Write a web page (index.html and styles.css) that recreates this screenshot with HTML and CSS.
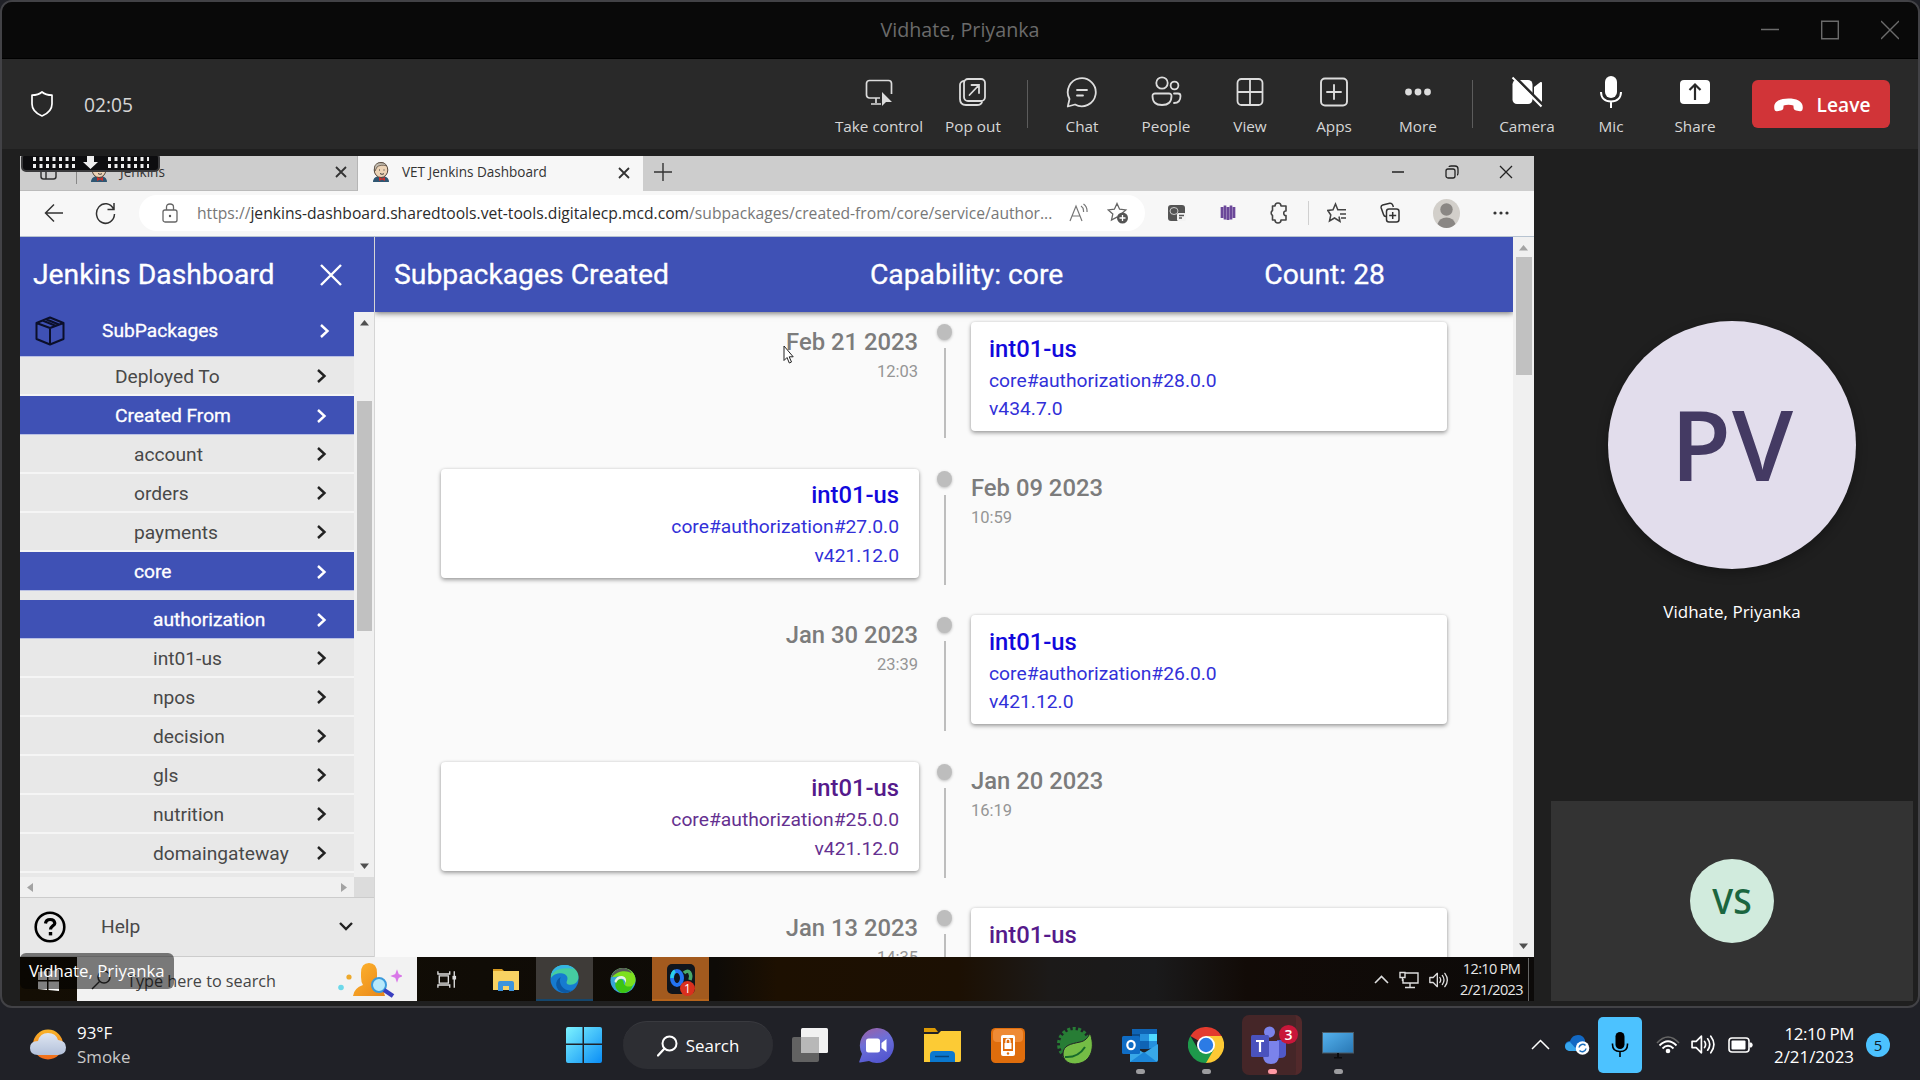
FILE: index.html
```
<!DOCTYPE html>
<html lang="en">
<head>
<meta charset="utf-8">
<title>Vidhate, Priyanka</title>
<link rel="stylesheet" href="styles.css">
</head>
<body>
<svg width="0" height="0" class="defs">
  <defs>
    <symbol id="chev" viewBox="0 0 12 16"><path d="M2 2l6.500 6L2 14" fill="none" stroke="currentColor" stroke-width="2.400"/></symbol>
    <symbol id="cross" viewBox="0 0 12 12"><path d="M1 1l10 10M11 1L1 11" fill="none" stroke="currentColor" stroke-width="1.800"/></symbol>
    <symbol id="jenkins" viewBox="0 0 18 20"><path d="M1 20c0-4 3-6 8-6s8 2 8 6z" fill="#2f5672"/><ellipse cx="9" cy="8" rx="6.800" ry="7.500" fill="#ecd3b6" stroke="#53453a"/><path d="M3 9C1 3 5 .5 9 .7c3 0 5 1.300 5.500 3C11 3 7 3 5 5z" fill="#c3bcb0" stroke="#53453a" stroke-width=".7"/><path d="M7.500 7.500v1M12 7.500v1M8 11.500c1.500 1 3 1 4 0" stroke="#333" fill="none"/><path d="M7 15l3 1.500 3-1.500v4l-3-1.500L7 19z" fill="#c9302c"/></symbol>
    <symbol id="speaker" viewBox="0 0 24 20"><path d="M1 7h4l5-5v16l-5-5H1zM13 7q2 3 0 6M16 4.500q4 5.500 0 11M19 2q6 8 0 16" fill="none" stroke="currentColor" stroke-width="1.600" stroke-linejoin="round" stroke-linecap="round"/></symbol>
  </defs>
</svg>
<div class="desktop">
  <div class="window">
    <header class="titlebar">
      <span class="win-title">Vidhate, Priyanka</span>
      <div class="win-buttons">
        <svg width="18" height="20"><path d="M0 9.500h18" stroke="#6b6b6b" stroke-width="1.500"/></svg>
        <svg width="18" height="20"><path d="M.7 1.200h16.600v17.600H.7z" fill="none" stroke="#6b6b6b" stroke-width="1.400"/></svg>
        <svg width="18" height="20"><path d="M0 1l18 18M18 1L0 19" stroke="#6b6b6b" stroke-width="1.400"/></svg>
      </div>
    </header>
    <div class="callbar">
      <svg class="shield" width="24" height="28" viewBox="0 0 24 28"><path d="M12 2c2.500 2.200 6 3.200 10 3.200V14c0 5.500-4 9.500-10 12C6 23.500 2 19.500 2 14V5.200C6 5.200 9.500 4.200 12 2z" fill="none" stroke="#fff" stroke-width="1.700" stroke-linejoin="round"/></svg>
      <span class="timer">02:05</span>
      <nav class="call-actions">
        <div class="act wide"><svg width="32" height="32" viewBox="0 0 32 32"><g fill="none" stroke="#dcdcdc" stroke-width="1.700"><path d="M17 22H6.500A3 3 0 0 1 3.500 19V7.500a3 3 0 0 1 3-3h19a3 3 0 0 1 3 3V18M13 22v5M8 28h10"/></g><path d="M19 16v14l4-4h6z" fill="#dcdcdc"/></svg><span>Take control</span></div>
        <div class="act"><svg width="32" height="32" viewBox="0 0 32 32"><g fill="none" stroke="#dcdcdc" stroke-width="1.800" stroke-linecap="round"><rect x="7" y="3" width="21" height="22" rx="4"/><path d="M7 5C4.500 5 3 7 3 9v14c0 4 2 6 6 6h11c3 0 4.500-1 5-3M12.500 19L22 9M14.500 9H22v8"/></g></svg><span>Pop out</span></div>
        <i class="bar"></i>
        <div class="act"><svg width="32" height="32" viewBox="0 0 32 32"><g fill="none" stroke="#dcdcdc" stroke-width="1.800" stroke-linejoin="round" stroke-linecap="round"><path d="M1.800 30.500L3.500 23A14 14 0 1 1 9 28.500z"/><path d="M11 14h10M11 19.500h6"/></g></svg><span>Chat</span></div>
        <div class="act"><svg width="32" height="32" viewBox="0 0 32 32"><g fill="none" stroke="#dcdcdc" stroke-width="1.800" stroke-linecap="round"><circle cx="12" cy="7" r="5.700"/><circle cx="24.500" cy="9.500" r="3.900"/><path d="M5 17.500h14a2.500 2.500 0 0 1 2.500 2.500c0 6-3 9-9.500 9s-9.500-3-9.500-9A2.500 2.500 0 0 1 5 17.500zM24 17.500h4a2.500 2.500 0 0 1 2.500 2.500c0 4.500-2 7-6.500 7"/></g></svg><span>People</span></div>
        <div class="act"><svg width="32" height="32" viewBox="0 0 32 32"><g fill="none" stroke="#dcdcdc" stroke-width="1.800"><rect x="3.500" y="3" width="25" height="26" rx="4"/><path d="M16 3v26M3.500 16h25"/></g></svg><span>View</span></div>
        <div class="act"><svg width="32" height="32" viewBox="0 0 32 32"><g fill="none" stroke="#dcdcdc" stroke-width="1.900" stroke-linecap="round"><rect x="3" y="2.500" width="26" height="27" rx="4"/><path d="M16 9v14M9 16h14"/></g></svg><span>Apps</span></div>
        <div class="act"><svg width="32" height="32" viewBox="0 0 32 32" fill="#dcdcdc"><circle cx="6.500" cy="16" r="3.400"/><circle cx="16" cy="16" r="3.400"/><circle cx="25.500" cy="16" r="3.400"/></svg><span>More</span></div>
        <i class="bar"></i>
        <div class="act"><svg width="32" height="32" viewBox="0 0 32 32"><rect x="1.500" y="4" width="20" height="24" rx="4.500" fill="#fff"/><path d="M23 11l6.500-5q1.500-.5 1.500 1v18q0 1.500-1.500 1L23 21z" fill="#fff"/><path d="M4 1l28 28" stroke="#292929" stroke-width="3"/><path d="M1.500 1.500l29 29" stroke="#fff" stroke-width="2"/></svg><span>Camera</span></div>
        <div class="act"><svg width="32" height="32" viewBox="0 0 32 32"><rect x="10" y="0" width="12" height="22" rx="6" fill="#fff"/><path d="M6 16c0 6 4 9.500 10 9.500S26 22 26 16M16 25.500V32" fill="none" stroke="#fff" stroke-width="2"/></svg><span>Mic</span></div>
        <div class="act"><svg width="32" height="32" viewBox="0 0 32 32"><rect x="1" y="4" width="30" height="24" rx="4" fill="#fff"/><path d="M16 24V9M10.500 14L16 8.500l5.500 5.500" fill="none" stroke="#292929" stroke-width="2.200"/></svg><span>Share</span></div>
      </nav>
      <button class="leave"><svg width="29" height="14" viewBox="0 0 29 14"><path d="M14.500 .5C22 .5 28.800 3 28.800 9.200c0 3-1 4.300-2.800 4l-4-.7c-1.700-.3-2.300-1.200-2.400-2.700l-.2-2.200c-3-1-6.800-1-9.800 0l-.2 2.200c-.1 1.500-.7 2.400-2.400 2.700l-4 .7C1.200 13.500.2 12.200.2 9.200.2 3 7 .5 14.500.5z" fill="#fff"/></svg>Leave</button>
    </div>

    <div class="stage">
      <section class="shared">
        <div class="tabstrip">
          <div class="tab inactive">
            <svg width="18" height="18" viewBox="0 0 18 18"><rect x="1" y="1" width="15" height="15" rx="2.500" fill="none" stroke="#333" stroke-width="1.500"/><path d="M6 5v11M1 5h15" stroke="#333" stroke-width="1.500"/></svg>
            <i></i>
            <svg width="18" height="20"><use href="#jenkins"/></svg>
            <span>Jenkins</span>
            <svg class="x" width="12" height="12"><use href="#cross"/></svg>
          </div>
          <div class="tab active">
            <svg width="18" height="20"><use href="#jenkins"/></svg>
            <span>VET Jenkins Dashboard</span>
            <svg class="x" width="12" height="12"><use href="#cross"/></svg>
          </div>
          <svg class="newtab" width="18" height="18"><path d="M9 0v18M0 9h18" stroke="#333" stroke-width="1.400"/></svg>
          <div class="browser-buttons">
            <svg width="14" height="14"><path d="M1 7h12" stroke="#222" stroke-width="1.400"/></svg>
            <svg width="14" height="14" viewBox="0 0 14 14"><g fill="none" stroke="#222" stroke-width="1.300"><rect x="1" y="4" width="9" height="9" rx="2"/><path d="M4 2q0-1 2-1h4q3 0 3 3v4q0 2-1 2"/></g></svg>
            <svg width="14" height="14"><path d="M1 1l12 12M13 1L1 13" stroke="#222" stroke-width="1.300"/></svg>
          </div>
          <div class="handle"><svg width="116" height="14"><g stroke="#eee" stroke-width="4" stroke-dasharray="3 3.500"><path d="M0 3h42M0 10h42M75 3h42M75 10h42"/></g><path d="M54 0h7v6h4l-7.500 7L50 6h4z" fill="#eee"/></svg></div>
        </div>
        <div class="addressbar">
          <svg width="20" height="20"><path d="M19 10H1.500M10 1.500L1.500 10l8.500 8.500" fill="none" stroke="#333" stroke-width="1.500"/></svg>
          <svg class="reload" width="22" height="24" viewBox="0 0 22 24"><path d="M19.500 8A9 9.800 0 1 0 20.500 13M20 2v6.500h-6.500" fill="none" stroke="#333" stroke-width="1.500"/></svg>
          <div class="url">
            <svg width="16" height="20" viewBox="0 0 16 20"><rect x="1" y="7" width="14" height="12" rx="2" fill="none" stroke="#666" stroke-width="1.300"/><path d="M4.500 7V4q0-3 3.500-3t3.500 3v3" fill="none" stroke="#666" stroke-width="1.300"/><circle cx="8" cy="13" r="1.200" fill="#555"/></svg>
            <span class="link">https://<b>jenkins-dashboard.sharedtools.vet-tools.digitalecp.mcd.com</b>/subpackages/created-from/core/service/author...</span>
            <svg class="aloud" width="19" height="20" viewBox="0 0 19 20"><path d="M1 18L7 3l6 15M3 13h8M12 3q3 2 2.500 6M14.500 1q4 3 3.500 8" fill="none" stroke="#777" stroke-width="1.200"/></svg>
            <svg width="22" height="22" viewBox="0 0 22 22"><path d="M10 1.500l2.600 5.700 6.200.7-4.600 4.200 1.300 6-5.500-3-5.500 3 1.300-6L1.200 7.900l6.200-.7z" fill="none" stroke="#666" stroke-width="1.300"/><circle cx="15.500" cy="16" r="5.500" fill="#555"/><path d="M15.500 13v6M12.500 16h6" stroke="#fff" stroke-width="1.300"/></svg>
          </div>
          <div class="extensions">
            <svg width="20" height="20" viewBox="0 0 20 20"><rect x="1" y="2" width="17" height="16" rx="3" fill="#555"/><ellipse cx="7" cy="8" rx="4" ry="3.500" fill="none" stroke="#ccc"/><rect x="10" y="10" width="9" height="8" rx="1.500" fill="#f3f3f3"/><path d="M12 12.500h5M12 15h3" stroke="#555" stroke-width="1.500"/></svg>
            <svg width="16" height="18" viewBox="0 0 16 18"><path d="M2 3v11M5 1.500v14M8 3v13M11 1.500v14M14 3v11" stroke="#6b4799" stroke-width="2.700"/></svg>
            <svg width="20" height="22" viewBox="0 0 20 22"><path d="M6 4a3 3 0 0 1 6 0h5v5c-3-.5-3 5 0 4.500V18h-5a3 3 0 0 1-6 0H3.500v-4.500a3 3 0 0 1 0-5V4z" fill="none" stroke="#444" stroke-width="1.600" stroke-linejoin="round"/></svg>
            <i></i>
            <svg width="20" height="22" viewBox="0 0 20 22"><path d="M12 14.500l1 5-5.500-3.500L2.500 19l1.300-6L.8 8.500l5.200-.7L8.500 2l2.300 5.800H19M13 12h6M14 16h5" fill="none" stroke="#444" stroke-width="1.500"/></svg>
            <svg width="20" height="22" viewBox="0 0 20 22"><g fill="none" stroke="#333" stroke-width="1.500"><rect x="6.500" y="7" width="12.500" height="13" rx="2.500"/><path d="M12.700 10v7M9.200 13.500h7M6 14.500q-2 0-2.500-2L1.200 6q-.5-2.500 1.500-3l7-1.700q2-.3 3 1.700l.7 2"/></g></svg>
            <svg width="27" height="29" viewBox="0 0 27 29"><ellipse cx="13.500" cy="14.500" rx="13.500" ry="14.500" fill="#d2cfca"/><circle cx="13.500" cy="10.500" r="6.200" fill="#8a8784"/><path d="M4.500 25q2-6.500 9-6.500t9 6.500q-4 4-9 4t-9-4z" fill="#8a8784"/></svg>
            <svg width="16" height="6" fill="#333"><circle cx="2" cy="3" r="1.600"/><circle cx="8" cy="3" r="1.600"/><circle cx="14" cy="3" r="1.600"/></svg>
          </div>
        </div>

        <div class="app">
          <aside class="sidebar">
            <div class="side-head"><span>Jenkins Dashboard</span><svg width="22" height="22"><path d="M1 1l20 20M21 1L1 21" stroke="#fff" stroke-width="2.400"/></svg></div>
            <div class="side-body">
              <div class="menu">
                <div class="row sel top"><svg class="cube" width="30" height="30" viewBox="0 0 30 30"><path d="M15 1.500l13.500 5.500v16L15 28.500 1.500 23V7zM1.500 7L15 12l13.500-5M15 12v16.500M7.500 4.500l13 5.300M11 3.200l13 5.300" fill="none" stroke="#0b0f2a" stroke-width="2" stroke-linejoin="round"/></svg><span>SubPackages</span><svg class="chev"><use href="#chev"/></svg></div>
                <div class="row l1"><span>Deployed To</span><svg class="chev"><use href="#chev"/></svg></div>
                <div class="row l1 sel"><span>Created From</span><svg class="chev"><use href="#chev"/></svg></div>
                <div class="row l2"><span>account</span><svg class="chev"><use href="#chev"/></svg></div>
                <div class="row l2"><span>orders</span><svg class="chev"><use href="#chev"/></svg></div>
                <div class="row l2"><span>payments</span><svg class="chev"><use href="#chev"/></svg></div>
                <div class="row l2 sel"><span>core</span><svg class="chev"><use href="#chev"/></svg></div>
                <div class="row l3 sel spaced"><span>authorization</span><svg class="chev"><use href="#chev"/></svg></div>
                <div class="row l3"><span>int01-us</span><svg class="chev"><use href="#chev"/></svg></div>
                <div class="row l3"><span>npos</span><svg class="chev"><use href="#chev"/></svg></div>
                <div class="row l3"><span>decision</span><svg class="chev"><use href="#chev"/></svg></div>
                <div class="row l3"><span>gls</span><svg class="chev"><use href="#chev"/></svg></div>
                <div class="row l3"><span>nutrition</span><svg class="chev"><use href="#chev"/></svg></div>
                <div class="row l3"><span>domaingateway</span><svg class="chev"><use href="#chev"/></svg></div>
              </div>
              <div class="vscroll side-scroll">
                <svg width="9" height="6"><path d="M0 5.500L4.500 0 9 5.500z" fill="#505050"/></svg>
                <div class="thumb"></div>
                <svg width="9" height="6"><path d="M0 .5h9L4.500 6z" fill="#505050"/></svg>
              </div>
            </div>
            <div class="hscroll"><div class="track"><svg width="6" height="9"><path d="M6 0v9L0 4.500z" fill="#a3a3a3"/></svg><svg width="6" height="9"><path d="M0 0v9l6-4.500z" fill="#a3a3a3"/></svg></div></div>
            <div class="help"><svg width="32" height="32" viewBox="0 0 32 32"><circle cx="16" cy="16" r="14.300" fill="none" stroke="#000" stroke-width="2.600"/><path d="M11.500 12.500q.5-4 4.700-4t4.600 3.700c0 2.400-4.300 3-4.300 6.300" fill="none" stroke="#000" stroke-width="3.200"/><rect x="14.800" y="21" width="3.400" height="3.400" fill="#000"/></svg><span>Help</span><svg width="16" height="12"><path d="M2 2l6 6 6-6" fill="none" stroke="#222" stroke-width="2.400"/></svg></div>
          </aside>

          <main class="main">
            <div class="main-head"><span>Subpackages Created</span><span>Capability: core</span><span>Count: 28</span></div>
            <div class="timeline">
              <div class="entry"><div class="when left">Feb 21 2023<small>12:03</small></div><div class="spine"></div><div class="card"><h3>int01-us</h3><p>core#authorization#28.0.0</p><p>v434.7.0</p></div></div>
              <div class="entry"><div class="card left"><h3>int01-us</h3><p>core#authorization#27.0.0</p><p>v421.12.0</p></div><div class="spine"></div><div class="when">Feb 09 2023<small>10:59</small></div></div>
              <div class="entry"><div class="when left">Jan 30 2023<small>23:39</small></div><div class="spine"></div><div class="card"><h3>int01-us</h3><p>core#authorization#26.0.0</p><p>v421.12.0</p></div></div>
              <div class="entry"><div class="card left visited"><h3>int01-us</h3><p>core#authorization#25.0.0</p><p>v421.12.0</p></div><div class="spine"></div><div class="when">Jan 20 2023<small>16:19</small></div></div>
              <div class="entry"><div class="when left">Jan 13 2023<small>14:35</small></div><div class="spine"></div><div class="card visited"><h3>int01-us</h3></div></div>
            </div>
            <svg class="cursor" width="12" height="20" viewBox="0 0 12 20"><path d="M1 1v14.500l3-3 2.300 5.500 2.200-1-2.300-5.200h4z" fill="#fff" stroke="#222"/></svg>
          </main>
          <div class="vscroll page-scroll">
            <svg width="9" height="6"><path d="M0 5.500L4.500 0 9 5.500z" fill="#a3a3a3"/></svg>
            <div class="thumb"></div>
            <svg width="9" height="6"><path d="M0 .5h9L4.500 6z" fill="#505050"/></svg>
          </div>
        </div>

        <div class="w10bar">
          <div class="w10start"><svg width="21" height="21" viewBox="0 0 21 21" fill="#fff"><path d="M0 2l9-1v9H0zM10.500 1L21 0v10H10.500zM0 11.500h9v8.500l-9-1zM10.500 11.500H21V21l-10.500-1z"/></svg></div>
          <div class="w10search">
            <svg width="20" height="20" viewBox="0 0 20 20"><circle cx="13" cy="7" r="6" fill="none" stroke="#333" stroke-width="1.500"/><path d="M8.500 11.500L1 19" stroke="#333" stroke-width="1.500"/></svg>
            <span>Type here to search</span>
            <svg class="promo" width="64" height="36" viewBox="0 0 64 36"><defs><linearGradient id="pg" x1="0" y1="0" x2="1" y2="1"><stop offset="0" stop-color="#ffb52e"/><stop offset="1" stop-color="#e8861a"/></linearGradient></defs><circle cx="11" cy="15" r="2.600" fill="#eda92c"/><circle cx="3" cy="25.500" r="2.800" fill="#6cd8ea"/><path d="M15 34q1-8 10-11-2-3-2-8v-4q0-10 8-10t8 10v4q0 5-2 8 9 3 10 11z" fill="url(#pg)"/><circle cx="41" cy="23" r="7" fill="#b7e9fb" stroke="#3b9bdc" stroke-width="2"/><path d="M46 28l9 6" stroke="#3a3fc0" stroke-width="4.500"/><path d="M59 9.500l1.200 3.300 3.300 1.200-3.300 1.200L59 18.500l-1.200-3.300-3.300-1.200 3.300-1.200z" fill="#d977e8" stroke="#d977e8" stroke-width="1.500"/></svg>
          </div>
          <div class="w10apps">
            <div class="w10tile"><svg width="20" height="19" viewBox="0 0 22 20"><g fill="none" stroke="#ddd" stroke-width="1.500"><path d="M1 1v3h13V1M1 19v-3h13v3M2.500 6h10v8h-10zM19 1v18"/></g><rect x="17" y="6" width="4" height="4" fill="#ddd"/></svg></div>
            <div class="w10tile"><svg width="26" height="24" viewBox="0 0 26 24"><path d="M0 1h9l3 3H0z" fill="#d79a20"/><path d="M0 3h26v19H0z" fill="#f8d262"/><path d="M5 23V15q0-2 2-2h12q2 0 2 2v8h-5v-5h-6v5z" fill="#3d94dc"/></svg></div>
            <div class="w10tile current"><svg width="29" height="30" viewBox="0 0 30 30"><circle cx="15" cy="15" r="14.500" fill="#167bd0"/><path d="M1 12C2 4 8 .5 15 .5 23 .5 29.500 6 29.500 13c0 5-4 8-8 8-4 0-5-2-4-4 2-4-1-8-6-8-5 0-9 2-10 5z" fill="#45cda0"/><path d="M1 12C2 4 8 .5 15 .5c5 0 8 2 10 4-6-1-20-2-24 7.500z" fill="#35b4e4"/><path d="M11 13c-3 7 3 15 12 14q-4 3-9 2.300C5 27 4 17 11 13z" fill="#0c59a4"/></svg></div>
            <div class="w10tile run"><svg width="26" height="27" viewBox="0 0 30 30"><circle cx="15" cy="15" r="14.500" fill="#38a6d8"/><path d="M7 24C4 17 9 12 14 14c3 2 1 5 3 6 4 2 8-1 10-4 0 8-5 13.500-12 13.500q-5 0-8-5.500z" fill="#3cc512"/><path d="M1.500 10C4 4 9 .5 15 .5 23 .5 29.500 7 29.500 14c0 5-4 8-8 8-4 0-5-2-4-4 2-4-1-8-6-8-5 0-8 2-10 0z" fill="#7de01e"/><path d="M1.500 10C4 4 9 .5 15 .5c5 0 9 3 10 6-6-4-17-3-23 5z" fill="#565b58"/><path d="M5 16q3-7 10-6 5 2 3 8-1-5-5-5-4 0-6 5z" fill="#e8f3e4"/></svg></div>
            <div class="w10tile alert"><svg width="28" height="30" viewBox="0 0 28 30"><rect width="28" height="30" rx="5" fill="#10151c"/><ellipse cx="10" cy="14" rx="5" ry="7" fill="none" stroke="#2374f2" stroke-width="4"/><path d="M5 14c0-4 1-6 3-7" stroke="#2bd0e8" stroke-width="3.500" fill="none"/><path d="M17 9c5-5 8 1 6 7" fill="none" stroke="#49a96a" stroke-width="3.500"/></svg><b>1</b></div>
          </div>
          <div class="w10tray">
            <svg width="15" height="9"><path d="M1 8l6.500-6.500L14 8" fill="none" stroke="#ddd" stroke-width="1.600"/></svg>
            <svg width="20" height="18" viewBox="0 0 20 18"><path d="M6 2h13v10H4V8M11 12v4M6 16.500h10M1 1.500h5v5H1zM3.500 6.500V10" fill="none" stroke="#ddd" stroke-width="1.400"/></svg>
            <svg width="20" height="18" color="#ddd"><use href="#speaker"/></svg>
            <div class="w10clock"><span>12:10 PM</span><span>2/21/2023</span></div>
            <i></i>
          </div>
        </div>
        <div class="nameplate">Vidhate, Priyanka</div>
      </section>

      <section class="people">
        <div class="remote"><div class="avatar big">PV</div><span>Vidhate, Priyanka</span></div>
        <div class="selfview"><div class="avatar small">VS</div></div>
      </section>
    </div>
  </div>

  <footer class="taskbar">
    <div class="weather">
      <svg width="37" height="32" viewBox="0 0 37 32"><defs><linearGradient id="sun" x2="0" y2="1"><stop offset="0" stop-color="#f9b52a"/><stop offset="1" stop-color="#f06a1a"/></linearGradient><linearGradient id="cl" x2="0" y2="1"><stop offset="0" stop-color="#dfe6f2"/><stop offset="1" stop-color="#b3c1da"/></linearGradient></defs><circle cx="18" cy="15.500" r="15" fill="url(#sun)"/><path d="M8 26q-8 0-8-7t8-7q2-8 10-8t10 7q8 .5 8 7.500T28 26z" fill="url(#cl)"/></svg>
      <div><span>93°F</span><span class="dim">Smoke</span></div>
    </div>
    <div class="dock">
      <div class="cell"><svg width="36" height="36" viewBox="0 0 36 36"><defs><linearGradient id="wg" x2="1" y2="1"><stop offset="0" stop-color="#7df3ff"/><stop offset="1" stop-color="#0a8df5"/></linearGradient></defs><path d="M2 0h14.500v16.500H0V2q0-2 2-2zM18 0h16q2 0 2 2v14.500H18zM0 18h16.500v18H2q-2 0-2-2zM18 18h18v16q0 2-2 2H18z" fill="url(#wg)"/></svg></div>
      <div class="search"><svg width="21" height="22" viewBox="0 0 21 22"><circle cx="12.500" cy="8.500" r="7" fill="none" stroke="#fff" stroke-width="2"/><path d="M7.500 13.500L1 20.500" stroke="#fff" stroke-width="2.200" stroke-linecap="round"/></svg><span>Search</span></div>
      <div class="cell"><svg width="36" height="34" viewBox="0 0 36 34"><rect x="0" y="9" width="27" height="25" rx="2" fill="#626262"/><rect x="9" y="0" width="27" height="25" rx="1.500" fill="#f2f2f2"/><path d="M9 9h18v16H9z" fill="#b8b8b8"/></svg></div>
      <div class="cell"><svg width="35" height="35" viewBox="0 0 35 35"><defs><linearGradient id="cg" x2=".4" y2="1"><stop offset="0" stop-color="#a05fa0"/><stop offset=".5" stop-color="#6c6fd8"/><stop offset="1" stop-color="#5558d0"/></linearGradient></defs><path d="M17.500 0A17 17.500 0 1 1 10 33l-9 1.500q-1 0-.7-1L3 26A17.300 17.500 0 0 1 17.500 0z" fill="url(#cg)"/><rect x="7" y="10.500" width="14" height="14" rx="2.500" fill="#fff"/><path d="M22.500 15l5-4v13l-5-4z" fill="#fff"/></svg></div>
      <div class="cell"><svg width="37" height="34" viewBox="0 0 37 34"><path d="M0 0h11l3 4H0z" fill="#dc9a04"/><path d="M0 6h14l3-3h20v29q0 2-2 2H0z" fill="#fccb35"/><path d="M6 34v-7q0-4 4-4h17q4 0 4 4v7z" fill="#0a78cf"/><path d="M11 28.500h14" stroke="#07457c" stroke-width="1.500"/></svg></div>
      <div class="cell"><svg width="34" height="35" viewBox="0 0 34 35"><rect width="34" height="35" rx="4.500" fill="#df6d0c"/><rect x="2" y="1" width="30" height="13" rx="4" fill="#ee8a35"/><rect x="10" y="7" width="14" height="21" rx="2" fill="#fff"/><rect x="12" y="10" width="10" height="13" fill="#df6d0c"/><path d="M15 15v-2q0-2 2-2t2 2v2" fill="none" stroke="#fff" stroke-width="1.300"/><rect x="13.500" y="15" width="7" height="6" fill="#fff"/><circle cx="17" cy="25.500" r="1.200" fill="#df6d0c"/></svg></div>
      <div class="cell"><svg width="37" height="37" viewBox="0 0 37 37"><path d="M20 0v5L6 30 4 27Q-3 17 5 8t15-8z" fill="none"/><circle cx="18" cy="17" r="15" fill="none" stroke="#277d35" stroke-width="4" stroke-dasharray="3 2.300"/><circle cx="18" cy="17" r="14" fill="#277d35"/><path d="M34 6c5 12 3 30-15 31C11 37 7 32 7 27c0-9 8-10 17-12 5-1 8-4 10-9z" fill="#74bd45" stroke="#202127"/><path d="M9 30q13 1 20-10" fill="none" stroke="#176b2b" stroke-width="2"/></svg></div>
      <div class="cell"><svg width="36" height="34" viewBox="0 0 36 34"><path d="M10 1h25v20H10z" fill="#0f64b5"/><path d="M10 6h8v9h-8z" fill="#0a4d8f"/><path d="M18 6h9v7h-9zM27 13h8v7h-8z" fill="#2590dd"/><path d="M27 6h8v7h-8z" fill="#50d9ff"/><path d="M8 16l14 9 14-9v16q0 2-2 2H8z" fill="#38a8e8"/><path d="M8 34l14-10 13 10z" fill="#1c86d8"/><rect y="8" width="18" height="18" rx="1.500" fill="#0f6cc4"/><ellipse cx="9" cy="17" rx="3.700" ry="4.200" fill="none" stroke="#fff" stroke-width="2.200"/></svg><i></i></div>
      <div class="cell"><svg width="36" height="36" viewBox="0 0 36 36"><path d="M18 18L2.400 9A18 18 0 0 1 33.600 9z" fill="#e33b2e"/><path d="M18 18V9h15.600A18 18 0 0 1 18 36z" fill="#fcc934"/><path d="M2.400 9L10.200 22.500 25.800 22.500 18 36A18 18 0 0 1 2.400 9z" fill="#1e9a4b"/><circle cx="18" cy="18" r="9" fill="#fff"/><circle cx="18" cy="18" r="7.200" fill="#2c7be5"/></svg><i></i></div>
      <div class="cell teams"><svg width="36" height="40" viewBox="0 -1 36 40"><circle cx="18.500" cy="6" r="5.500" fill="#7b83eb"/><path d="M26 14h9v14q0 4-6 4h-3z" fill="#5059c9"/><path d="M12 15h16v14q0 9-8 9T12 29z" fill="#7b83eb"/><rect y="9" width="18" height="22" rx="1.500" fill="#4a52bd"/><path d="M5 15h8M9 15v11" stroke="#fff" stroke-width="2.200"/></svg><b>3</b><i></i></div>
      <div class="cell"><svg width="32" height="27" viewBox="0 0 32 27"><defs><linearGradient id="mg" x2="1" y2="1"><stop offset="0" stop-color="#55b2ee"/><stop offset="1" stop-color="#2877b4"/></linearGradient></defs><rect x=".5" y=".5" width="31" height="20.500" fill="url(#mg)" stroke="#4a5a66"/><path d="M15 21h2v4h3v1.500h-8V25h3z" fill="#0c0c0f"/></svg><i></i></div>
    </div>
    <div class="tray">
      <svg width="19" height="11"><path d="M1 10l8.500-8.500L18 10" fill="none" stroke="#fff" stroke-width="1.500"/></svg>
      <svg width="25" height="20" viewBox="0 0 25 20"><path d="M5 15.500Q0 15.500 0 11t5-5q2-6 8-6 5 0 7 5v10.500z" fill="#1268c3"/><path d="M4 16Q0 15 0 11q1-4 5-4l8 9z" fill="#37a6ec"/><circle cx="17.500" cy="13" r="6.800" fill="#fff"/><path d="M14 12.500a3.800 3.800 0 0 1 6.500-2M21 13.500a3.800 3.800 0 0 1-6.500 2" fill="none" stroke="#1c6fbd" stroke-width="1.500"/></svg>
      <div class="mic"><svg width="18" height="25" viewBox="0 0 18 25"><rect x="4.500" y="0" width="9" height="17" rx="4.500"/><path d="M1.500 11.500v1q0 7 7.500 7t7.500-7v-1M9 19.500V25" fill="none" stroke="#000" stroke-width="1.600"/></svg></div>
      <svg class="wifi" width="24" height="18" viewBox="0 0 24 18"><g fill="none" stroke-width="1.600"><path d="M1 7Q12-5 23 7" stroke="#666"/><path d="M3.500 9.500Q12 1 20.500 9.500M6.500 12.500Q12 7 17.500 12.500" stroke="#fff" stroke-width="1.800"/></g><circle cx="12" cy="15" r="2.300" fill="#fff"/></svg>
      <svg width="25" height="21" color="#fff"><use href="#speaker"/></svg>
      <svg width="25" height="16" viewBox="0 0 25 16"><rect x="1" y="1" width="20" height="14" rx="3" fill="none" stroke="#fff" stroke-width="1.600"/><rect x="3.500" y="3.500" width="14" height="9" rx="1" fill="#fff"/><path d="M22 6h1.500q1.500 2 0 4H22z" fill="#fff" stroke="#fff"/></svg>
      <div class="clock"><span>12:10 PM</span><span>2/21/2023</span></div>
      <div class="count">5</div>
    </div>
  </footer>
</div>
</body>
</html>
```
FILE: styles.css
```
* { box-sizing: border-box; }
body { margin: 0; font-family: "Open Sans", "Noto Sans", sans-serif; color: #fff; }
svg { display: block; flex: none; }
.defs { position: absolute; }
.desktop { width: 1920px; height: 1080px; background: #202127; display: flex; flex-direction: column; overflow: hidden; }

/* meeting window */
.window { height: 1008px; width: 1920px; border: 2px solid #424246; border-radius: 12px; background: #1f1f1f; display: flex; flex-direction: column; overflow: hidden; }
.titlebar { height: 57px; background: #090909; border-bottom: 1px solid #000; display: grid; grid-template-columns: 1fr auto 1fr; align-items: center; padding-bottom: 1px; }
.win-title { grid-column: 2; font-size: 19.700px; color: #6b6b6b; }
.win-buttons { display: flex; justify-content: flex-end; gap: 42px; padding-right: 19px; }
.callbar { height: 90px; background: #292929; display: flex; align-items: center; padding: 0 28px 0 28px; }
.timer { font-size: 19.200px; color: #d6d6d6; margin-left: 30px; padding-top: 1px; }
.call-actions { margin-left: auto; display: flex; align-items: center; }
.act { width: 84px; display: flex; flex-direction: column; align-items: center; gap: 7px; font-size: 15.300px; line-height: 22px; color: #d6d6d6; padding-top: 4px; white-space: nowrap; }
.act.wide { width: 104px; }
.bar { width: 1px; height: 48px; background: #5c5c5c; margin: 0 12px; }
.leave { width: 138px; height: 48px; border: 0; border-radius: 6px; background: #d13438; color: #fff; font: 600 19.200px "Open Sans", sans-serif; display: flex; align-items: center; justify-content: center; gap: 14px; padding: 1px 0 0 2px; margin-left: 15px; }

.stage { flex: 1; display: flex; padding: 7px 5px 5px 18px; }
.shared { width: 1514px; height: 845px; display: flex; flex-direction: column; position: relative; background: #fafafa; overflow: hidden; }

/* browser chrome */
.tabstrip { height: 35px; background: #cdcdcd; display: flex; align-items: flex-start; position: relative; font-size: 13.550px; color: #333; }
.tab { height: 35px; display: flex; align-items: center; padding-bottom: 3px; }
.tab.inactive { width: 338px; padding-left: 20px; border-right: 1px solid #b5b5b5; border-bottom: 1px solid #bbb; }
.tab.inactive i { width: 1px; height: 24px; background: #888; margin: 0 13px 0 18px; }
.tab.inactive span { margin-left: 12px; }
.tab.active { width: 285px; padding-left: 14px; background: #f7f7f7; }
.tab.active span { margin-left: 12px; }
.x { margin: 1px 10px 0 auto; }
.active .x { margin-right: 13px; }
.newtab { margin: 7px 0 0 11px; }
.browser-buttons { margin: 9px 21px 0 auto; display: flex; gap: 40px; }
.handle { position: absolute; left: 1px; top: -3px; width: 139px; height: 19px; background: #0d0d0f; border: 2px solid #3a3a3c; border-radius: 5px; overflow: hidden; display: flex; align-items: flex-end; justify-content: center; }
.addressbar { height: 46px; background: #f7f7f7; border-bottom: 1px solid #b7c3d0; display: flex; align-items: center; padding: 0 0 1px 24px; color: #777; }
.reload { margin-left: 30px; }
.url { margin-left: 23px; width: 1006px; height: 36px; border-radius: 18px; background: #fff; display: flex; align-items: center; padding: 0 16px 0 23px; }
.link { margin-left: 19px; font-size: 15.670px; white-space: nowrap; width: 857px; }
.link b { font-weight: 400; color: #2b2b2b; }
.aloud { margin: 0 auto 0 15px; }
.extensions { display: flex; align-items: center; gap: 33px; padding-left: 22px; }
.extensions i { width: 1px; height: 24px; background: #d0d0d0; margin: 0 -14.500px; }

/* dashboard */
.app { height: 720px; display: flex; font-family: Roboto, sans-serif; color: #484848; }
.sidebar { width: 355px; display: flex; flex-direction: column; border-right: 1px solid #d5d5d5; background: #e8e8e8; }
.side-head { height: 75px; background: #3f51b5; color: #fff; display: flex; align-items: center; justify-content: space-between; padding: 0 32px 0 13px; font-size: 28.300px; -webkit-text-stroke: .3px #fff; }
.side-body { height: 565px; display: flex; }
.menu { width: 334px; overflow: hidden; }
.row { height: 39px; border-bottom: 2px solid #f5f5f5; display: flex; align-items: center; justify-content: space-between; padding: 1px 26px 0 0; font-size: 19.200px; }
.row.sel { background: #3f51b5; color: #fff; border-bottom: 1px solid #b9c0e4; }
.row.sel span { -webkit-text-stroke: .3px #fff; }
.row.top { height: 45px; padding: 0 23px 7px 15px; }
.row.top span { margin-right: auto; margin-left: 37px; }
.row.l1 { padding-left: 95px; }
.row.l2 { padding-left: 114px; }
.row.l3 { padding-left: 133px; }
.row.spaced { margin-top: 9px; }
.chev { width: 12px; height: 16px; color: #222; }
.sel .chev { color: #fff; }
.vscroll { background: #f0f0f0; display: flex; flex-direction: column; align-items: center; }
.vscroll .thumb { background: #c1c1c1; }
.vscroll svg:last-child { margin-top: auto; }
.side-scroll { width: 20px; padding: 8px 0; }
.side-scroll .thumb { width: 15px; height: 230px; margin-top: 75px; }
.hscroll { height: 21px; background: #dcdcdc; border-bottom: 1px solid #ccc; }
.track { width: 334px; height: 20px; background: #f0f0f0; display: flex; align-items: center; justify-content: space-between; padding: 0 7px; }
.help { flex: 1; display: flex; align-items: center; padding: 0 20px 1px 14px; font-size: 19.200px; border-bottom: 1px solid #ccc; }
.help span { margin: 0 auto 0 35px; }
.main { width: 1138px; display: flex; flex-direction: column; position: relative; overflow: hidden; background: #fafafa; }
.main-head { height: 75px; flex: none; background: #3f51b5; color: #fff; box-shadow: 0 1px 6px rgba(0,0,0,.6); display: flex; align-items: center; justify-content: space-between; padding: 0 128px 0 19px; font-size: 28.300px; -webkit-text-stroke: .3px #fff; position: relative; z-index: 1; }
.timeline { padding: 10px 66px 0; }
.entry { display: grid; grid-template-columns: 478px 52px 476px; height: 146.600px; }
.when { font-size: 23.800px; font-weight: 500; line-height: 30px; color: #7c7c7c; padding-top: 4.500px; }
.when small { display: block; font-size: 16.500px; font-weight: 400; line-height: 22px; margin-top: 4px; color: #959595; }
.when.left { text-align: right; padding-right: 1px; }
.spine { display: flex; flex-direction: column; align-items: center; padding: 2px 1px 0 0; }
.spine::before { content: ""; width: 15px; height: 16px; border-radius: 50%; background: #bdbdbd; box-shadow: 0 1px 3px rgba(0,0,0,.25); }
.spine::after { content: ""; width: 2px; height: 90px; background: #bdbdbd; margin-top: 8px; }
.card { height: 109px; background: #fff; border-radius: 4px; box-shadow: 0 2px 4px rgba(0,0,0,.36), 0 0 3px rgba(0,0,0,.1); padding: 11.500px 20px 0 18px; color: #3230d8; }
.card h3 { margin: 0 0 3px; font-size: 23.800px; font-weight: 500; line-height: 30px; color: #1208dc; }
.card p { margin: 0; font-size: 19.280px; line-height: 28.500px; }
.card.left { text-align: right; }
.card.visited { color: #653090; }
.card.visited h3 { color: #551a8b; }
.cursor { position: absolute; left: 408px; top: 108px; z-index: 2; }
.page-scroll { width: 21px; padding: 8px 0; }
.page-scroll .thumb { width: 16px; height: 118px; margin-top: 6px; }

/* remote taskbar */
.w10bar { height: 44px; background: linear-gradient(90deg, #140e04 0, #0e0b07 46%, #1d1001 50%, #1c1003 62%, #1c1a19 68%, #1a1a1b 75%, #120b07 81%, #0c0a09 100%); display: flex; }
.w10start { width: 57px; display: flex; align-items: center; justify-content: center; padding-top: 2px; }
.w10search { width: 340px; background: #f2f2f2; color: #444; display: flex; align-items: center; padding: 2px 15px 0 14px; font-size: 16.200px; }
.w10search span { margin-left: 16px; white-space: nowrap; padding-top: 1px; }
.promo { margin-left: auto; }
.w10apps { display: flex; }
.w10tile { width: 59px; display: flex; align-items: center; justify-content: center; position: relative; padding-top: 1px; }
.w10tile.current { width: 57px; margin-left: 1px; background: #3e3b38; border-bottom: 2px solid #16466b; }
.w10tile.run { width: 59px; padding-top: 3px; }
.w10tile.alert { width: 57px; background: #a35a1e; border-bottom: 2px solid #b5641c; }
.w10tile b { position: absolute; right: 14px; bottom: 3px; width: 15px; height: 15px; border-radius: 50%; background: #d9301e; font: 400 12px/15px "Open Sans", sans-serif; text-align: center; }
.w10tray { margin-left: auto; display: flex; align-items: center; gap: 10px; padding-top: 1px; }
.w10clock { font-size: 14.500px; line-height: 21px; display: flex; flex-direction: column; align-items: center; color: #e6e6e6; width: 65px; letter-spacing: -.65px; margin-bottom: 1px; }
.w10tray > i { width: 1px; height: 44px; background: #666; margin: 0 5px 0 -6px; }
.nameplate { position: absolute; left: 0; top: 797px; width: 154px; height: 36px; border-radius: 6px; background: rgba(0,0,0,.5); padding-left: 9px; font-size: 16.800px; line-height: 35px; white-space: nowrap; }

/* participants */
.people { margin-left: 17px; flex: 1; display: flex; flex-direction: column; }
.remote { height: 645px; display: flex; flex-direction: column; align-items: center; padding-top: 165px; font-size: 17px; }
.remote span { margin-top: 31px; line-height: 24px; }
.avatar { border-radius: 50%; display: flex; align-items: center; justify-content: center; font-weight: 600; }
.big { width: 248px; height: 248px; background: #e2ddec; color: #443a63; font-size: 98px; letter-spacing: 1px; padding: 0 0 5px 1px; box-shadow: 0 4px 12px rgba(0,0,0,.3); }
.small { width: 84px; height: 84px; background: #d1ebdd; color: #1b663f; font-size: 33.500px; padding-bottom: 1px; }
.selfview { flex: 1; background: #333; display: flex; align-items: center; justify-content: center; }

/* local taskbar */
.taskbar { height: 72px; display: grid; grid-template-columns: 551px auto 1fr; align-items: center; font-size: 16.900px; }
.weather { display: flex; align-items: center; gap: 10px; padding: 2px 0 0 30px; line-height: 24px; }
.weather span, .clock span { display: block; }
.dim { color: #c8c8c8; }
.dock { display: flex; align-items: center; }
.cell { width: 66px; height: 60px; margin-top: 2px; display: flex; align-items: center; justify-content: center; position: relative; }
.cell > i { position: absolute; bottom: 1px; left: 29px; width: 9px; height: 5px; border-radius: 3px; background: #9c9c9f; }
.search { width: 150px; height: 48px; margin: 2px 4px 0 6px; border-radius: 24px; background: #2d2e33; border-top: 1px solid #393a3f; display: flex; align-items: center; justify-content: center; gap: 8px; }
.teams { width: 60px; margin: 2px 3px 0; background: #452628; border-radius: 7px; border-right: 6px solid #52292b; }
.cell.teams > i { background: #ff99a4; left: 26px; }
.teams b { position: absolute; top: 10px; right: -2px; width: 19px; height: 19px; border-radius: 50%; background: #c9173a; font: 600 14px/19px "Open Sans", sans-serif; text-align: center; }
.tray { display: flex; align-items: center; justify-content: flex-end; padding: 1px 30px 0 0; }
.tray > svg:nth-child(2) { margin-left: 15px; }
.mic { width: 44px; height: 56px; border-radius: 5px; background: #4cc2ff; display: flex; align-items: center; justify-content: center; margin: 0 14px 0 8px; }
.wifi { margin-right: 11px; }
.tray svg:nth-child(5) { margin-right: 12px; }
.clock { text-align: right; line-height: 23px; margin-left: 20px; width: 81px; white-space: nowrap; }
.clock span:first-child { letter-spacing: -.4px; }
.count { width: 24px; height: 24px; border-radius: 50%; background: #4cc2ff; color: #10202b; font-size: 15px; line-height: 24px; text-align: center; margin-left: 12px; }
```
